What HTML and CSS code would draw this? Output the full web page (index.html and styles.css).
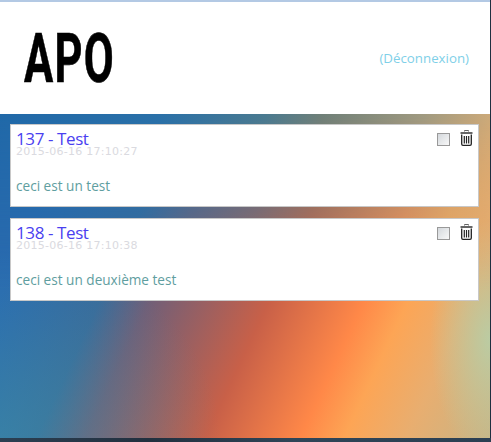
FILE: index.html
```html
<!DOCTYPE html>
<html lang="fr">
<head>
  <meta charset="UTF-8">
  <meta name="viewport" content="width=device-width, initial-scale=1.0">
  <title>APO</title>
  <link rel="stylesheet" href="styles.css">
</head>
<body>
  <div class="page">
    <div class="header">
      <h1 class="logo">APO</h1>
      <a class="logout" href="#">(Déconnexion)</a>
    </div>
    <div class="list">
      <div class="note">
        <div class="note-head">
          <div>
            <div class="note-title">137 - Test</div>
            <div class="note-date">2015-06-16 17:10:27</div>
          </div>
          <div class="note-tools">
            <span class="check"></span>
            <svg class="trash" viewBox="0 0 13 16" width="13" height="16">
              <path d="M4.500 1.500V.5h4v1" fill="none" stroke="#666" stroke-width="1"/>
              <path d="M.5 2h12v2H.5z" fill="#666"/>
              <path d="M1.700 4.500V14q0 1.300 1.300 1.300h7q1.300 0 1.300-1.300V4.500" fill="#fff" stroke="#222" stroke-width="1.300"/>
              <path d="M4.300 6v7.500M6.500 6v7.500M8.700 6v7.500" stroke="#222" stroke-width="1.200"/>
            </svg>
          </div>
        </div>
        <p class="note-text">ceci est un test</p>
      </div>
      <div class="note">
        <div class="note-head">
          <div>
            <div class="note-title">138 - Test</div>
            <div class="note-date">2015-06-16 17:10:38</div>
          </div>
          <div class="note-tools">
            <span class="check"></span>
            <svg class="trash" viewBox="0 0 13 16" width="13" height="16">
              <path d="M4.500 1.500V.5h4v1" fill="none" stroke="#666" stroke-width="1"/>
              <path d="M.5 2h12v2H.5z" fill="#666"/>
              <path d="M1.700 4.500V14q0 1.300 1.300 1.300h7q1.300 0 1.300-1.300V4.500" fill="#fff" stroke="#222" stroke-width="1.300"/>
              <path d="M4.300 6v7.500M6.500 6v7.500M8.700 6v7.500" stroke="#222" stroke-width="1.200"/>
            </svg>
          </div>
        </div>
        <p class="note-text">ceci est un deuxième test</p>
      </div>
    </div>
  </div>
  <div class="taskbar"></div>
</body>
</html>
```

FILE: styles.css
```css
html, body {
  height: 100%;
}

body {
  margin: 0;
  overflow: hidden;
  display: flex;
  flex-direction: column;
  font-family: "Open Sans", sans-serif;
  background: #1f3040;
}

.page {
  position: relative;
  flex: 1;
  margin-right: 1px;
  background:
    radial-gradient(60px 120px at 490px 340px, rgba(185, 205, 165, 0.95), rgba(185, 205, 165, 0)),
    radial-gradient(220px 190px at 0 100%, rgba(60, 150, 170, 0.5), rgba(60, 150, 170, 0)),
    linear-gradient(115deg, #2a6ab0 0%, #2a6ab0 20%, #3a6a9a 34.600%, #705f78 41.700%, #c86048 59%, #ff8848 72.700%, #fda555 79%, #e8ae70 88%, #c8b484 100%);
}

/* cooler tones along the top, fading out into the orange */
.page::before {
  content: '';
  position: absolute;
  top: 0;
  left: 0;
  width: 100%;
  height: 100%;
  background: linear-gradient(95deg, #2068a8 0%, #2a70a8 32%, #4a7a90 52%, #708078 63%, #a09a80 82%, #d4ac78 97%);
  -webkit-mask-image: linear-gradient(180deg, #000 118px, transparent 290px);
  mask-image: linear-gradient(180deg, #000 118px, transparent 290px);
}

.header {
  position: relative;
  display: flex;
  justify-content: space-between;
  align-items: center;
  height: 112px;
  background: #fff;
  border-top: 2px solid #b3c9e4;
  padding: 0 21px 0 24px;
}

.logo {
  margin: 0;
  font-family: Roboto, sans-serif;
  font-size: 69px;
  font-weight: 700;
  letter-spacing: 2px;
  line-height: 1;
  color: #000;
  -webkit-text-stroke: 0.6px #000;
  transform: scaleX(0.63);
  transform-origin: left center;
}

.logout {
  font-size: 13.300px;
  color: #7fd0e8;
  text-decoration: none;
}

.list {
  position: relative;
  display: flex;
  flex-direction: column;
  gap: 11px;
  padding: 10px 11px 0 10px;
}

.note {
  box-sizing: border-box;
  height: 83px;
  padding: 6px 5px 0 5px;
  background: #fff;
  border: 1px solid #c8c8c8;
}

.note-head {
  display: flex;
  justify-content: space-between;
}

.note-title {
  font-size: 17px;
  letter-spacing: -0.4px;
  line-height: 16px;
  color: #4a3ff0;
}

.note-date {
  font-family: "DejaVu Sans", sans-serif;
  font-size: 11px;
  letter-spacing: 0.26px;
  line-height: 9px;
  color: #dadae0;
}

.note-tools {
  display: flex;
  gap: 10px;
  margin-top: -1px;
}

.check {
  box-sizing: border-box;
  width: 13px;
  height: 13px;
  margin-top: 3px;
  border: 1px solid #999;
  background: linear-gradient(135deg, #d4d8dc, #f8f8f8);
}

.note-text {
  margin: 21px 0 0;
  font-size: 13.600px;
  line-height: 18px;
  color: #5f9ea0;
}

.taskbar {
  height: 4px;
  background: linear-gradient(90deg, #2b3f52, #22303f 30%, #2f4558 60%, #2b3f52);
}
```
